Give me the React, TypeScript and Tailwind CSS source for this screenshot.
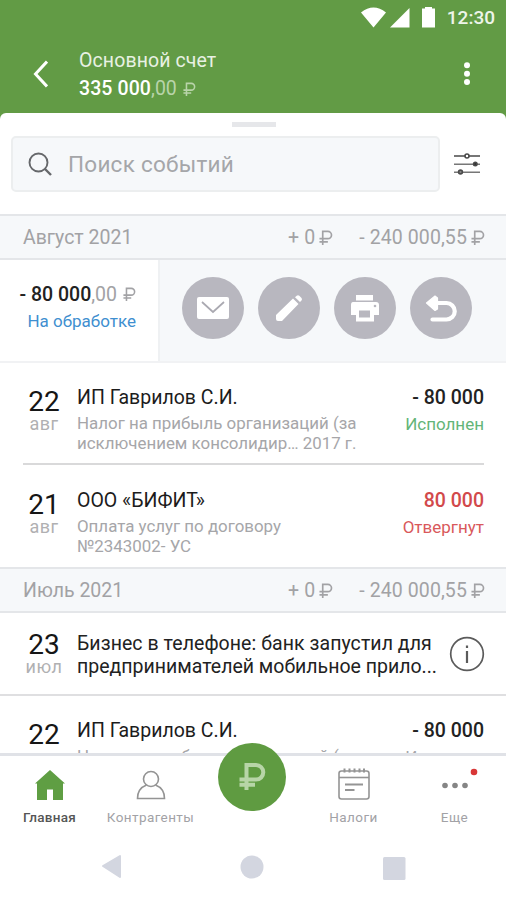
import React from "react";

const Ruble = ({ className }: { className: string }) => (
  <svg viewBox="0 0 15 16" className={className} fill="none" stroke="currentColor" strokeWidth="1.8">
    <path d="M4 16V1.500h5.500a3.900 3.900 0 0 1 0 7.800H0.500M0.500 12.700h9" />
  </svg>
);

function MonthBar({ title }: { title: string }) {
  return (
    <div className="flex h-[46px] shrink-0 items-center border-y-2 border-[#e4e6e9] bg-[#f6f8fa] pt-[2px] pl-[23px] pr-[21px] text-[19.5px] text-[#a2a2a5]">
      <span className="grow">{title}</span>
      <span className="flex items-center tracking-[0.1px]">+ 0<Ruble className="mb-[2px] ml-[4px] h-[15px] w-[14px]" /></span>
      <span className="ml-[26px] flex items-center tracking-[0.1px]">- 240 000,55<Ruble className="mb-[2px] ml-[4px] h-[15px] w-[14px]" /></span>
    </div>
  );
}

function DateBox({ day, month }: { day: string; month: string }) {
  return (
    <div className="w-[42px] shrink-0 text-center">
      <div className="text-[28px] leading-[27px] text-[#161616]">{day}</div>
      <div className="text-[18px] leading-[18px] tracking-[0.5px] text-[#b0b0b2]">{month}</div>
    </div>
  );
}

type EventProps = {
  day: string;
  name: string;
  lines: string[];
  amount: string;
  amountClass: string;
  status: string;
  statusClass: string;
};

function EventRow({ day, name, lines, amount, amountClass, status, statusClass }: EventProps) {
  return (
    <div className="flex pl-[23px] pr-[22px] pt-[25px]">
      <DateBox day={day} month="авг" />
      <div className="ml-[12px] grow whitespace-nowrap">
        <div className="-mt-[2px] text-[19.5px] leading-[24px] text-[#1c1c1c]">{name}</div>
        <div className="mt-[4px] text-[16.9px] leading-[19.5px] text-[#a6a6a9]">
          {lines.map((l) => <div key={l}>{l}</div>)}
        </div>
      </div>
      <div className="whitespace-nowrap text-right">
        <div className={"-mt-[2px] text-[19.5px] leading-[24px] " + amountClass}>{amount}</div>
        <div className={"mt-[4px] text-[17px] leading-[20px] " + statusClass}>{status}</div>
      </div>
    </div>
  );
}

const Circle = ({ children }: { children: React.ReactNode }) => (
  <div className="flex size-[62px] items-center justify-center rounded-full bg-[#b8b7bf]">
    <svg viewBox="0 0 62 62" className="size-[62px]">{children}</svg>
  </div>
);

function NavItem({ label, active, children }: { label: string; active?: boolean; children: React.ReactNode }) {
  return (
    <div className="flex w-[101px] flex-col items-center">
      <svg viewBox="0 0 50 42" className="mt-[11px] h-[42px] w-[50px]">{children}</svg>
      <span className={active ? "text-[13.5px] leading-[16px] font-medium text-[#555] tracking-[0.3px]" : "text-[13.5px] leading-[16px] text-[#a2a2a6] tracking-[0.4px]"}>{label}</span>
    </div>
  );
}

export default function App() {
  return (
    <div className="flex h-[900px] w-[506px] flex-col overflow-hidden bg-[#629b45] font-['Roboto',sans-serif]">
      <header className="h-[113px] shrink-0 text-white">
        <div className="flex h-[36px] justify-end pr-[11px]">
          <svg viewBox="0 0 76 36" className="h-[36px] w-[76px]" fill="#fff">
            <path d="M1 12.500Q13.500 2.500 26 12.500L13.500 27.500zM30 27.500L49.500 8V27.500zM62 8.500h3V7h7v1.500h3V27.500H62z" />
          </svg>
          <span className="ml-[11px] pt-[6px] text-[19px] leading-[24px] font-medium text-[#eef5ea]">12:30</span>
        </div>
        <div className="flex pl-[33px] pr-[36px]">
          <svg viewBox="0 0 15 28" className="mt-[24px] h-[28px] w-[15px]" fill="none" stroke="#fff" strokeWidth="3">
            <path d="M14 1.500L2.500 14L14 26.500" />
          </svg>
          <div className="ml-[31px] grow pt-[11px] text-[19.5px] leading-[28px]">
            <div className="text-[#e8f1e3] tracking-[0.1px]">Основной счет</div>
            <div className="flex items-center"><b className="font-medium tracking-[0.1px]">335 000</b><span className="text-[#b9d4aa]">,00</span><Ruble className="mb-[1px] ml-[6px] h-[14px] w-[13px] text-[#b9d4aa]" /></div>
          </div>
          <svg viewBox="0 0 6 24" className="mt-[26px] h-[24px] w-[6px]" fill="#fff">
            <circle cx="3" cy="3.200" r="3" /><circle cx="3" cy="11.800" r="3" /><circle cx="3" cy="20" r="3" />
          </svg>
        </div>
      </header>

      <main className="flex h-[640px] shrink-0 flex-col overflow-hidden rounded-t-[6px] bg-white">
        <div className="mt-[9px] ml-[232px] h-[5px] w-[44px] shrink-0 bg-[#e6e7ea]" />
        <div className="mt-[9px] flex shrink-0 items-center pl-[11px]">
          <div className="flex h-[56px] w-[429px] items-center rounded-[5px] border-2 border-[#eceeef] bg-[#f6f8fa] pl-[15px]">
            <svg viewBox="0 0 24 24" className="size-[24px]" fill="none" stroke="#66686b" strokeWidth="1.900">
              <circle cx="10.500" cy="10.500" r="9" /><path d="M17 17L23 23" strokeWidth="2.400" />
            </svg>
            <span className="ml-[16px] pt-[1px] text-[22.5px] tracking-[0.25px] text-[#a5a6a9]">Поиск событий</span>
          </div>
          <svg viewBox="0 0 28 24" className="ml-[13px] h-[24px] w-[28px]" fill="none" stroke="#4a4a4a" strokeWidth="1.600">
            <path d="M1 4H12M16 4H27" /><circle cx="14" cy="4" r="2" fill="#fff" />
            <path d="M1 12.300H27M1 20.300H27" stroke="#777" /><circle cx="22.300" cy="12" r="1.700" fill="#333" /><circle cx="7.500" cy="20" r="1.900" fill="#888" />
          </svg>
        </div>
        <div className="h-[22px] shrink-0" />
        <MonthBar title="Август 2021" />

        <div className="flex h-[103px] shrink-0 border-b-2 border-[#f1f2f4] bg-[#f6f8fa]">
          <div className="w-[160px] border-r-2 border-[#eff1f3] bg-white pr-[22px] pt-[23px] text-right">
            <div className="flex items-center justify-end text-[19.5px] leading-[24px]"><span className="font-medium text-[#222]">- 80 000</span><span className="text-[#a2a2a5]">,00</span><Ruble className="mb-[2px] ml-[6px] h-[14px] w-[13px] text-[#a2a2a5]" /></div>
            <div className="mt-[4px] text-[17px] leading-[20px] text-[#3f8fd0]">На обработке</div>
          </div>
          <div className="ml-[22px] flex gap-[14px] pt-[17px]">
            <Circle>
              <rect x="15" y="20" width="32" height="22" rx="2" fill="#fff" />
              <path d="M20 25L31 35L42 25" fill="none" stroke="#aaa9b1" strokeWidth="1.700" />
            </Circle>
            <Circle>
              <path d="M18 42v-4L35 21.500L40.500 27L24 44H20Q18 44 18 42zM37 20.300L38.700 18.800Q40 17.800 41.300 18.800L43.500 21Q44.500 22.300 43.500 23.500L42 25z" fill="#fff" />
            </Circle>
            <Circle>
              <path d="M22 18h17v5.500H22zM19 25h23q3 0 3 3v10h-5v6.500H22V38h-5V28q0-3 2-3z" fill="#fff" />
              <rect x="25" y="33.500" width="11" height="7" fill="#b8b7bf" /><circle cx="41" cy="29" r="1.300" fill="#b8b7bf" />
            </Circle>
            <Circle>
              <path d="M24 26H36.500a8 8 0 0 1 0 16.500H22.500" fill="none" stroke="#fff" strokeWidth="4.200" strokeLinecap="round" />
              <path d="M16.500 26L25 19L27.500 21V32L25 33.500z" fill="#fff" stroke="#fff" strokeWidth="1.200" strokeLinejoin="round" />
            </Circle>
          </div>
        </div>

        <div className="h-[100px] shrink-0">
          <EventRow day="22" name="ИП Гаврилов С.И." lines={["Налог на прибыль организаций (за", "исключением консолидир… 2017 г."]} amount="- 80 000" amountClass="font-medium text-[#222]" status="Исполнен" statusClass="text-[#64b578]" />
        </div>
        <div className="ml-[23px] mr-[22px] h-[2px] shrink-0 bg-[#d9d9da]" />
        <div className="h-[102px] shrink-0 pt-px">
          <EventRow day="21" name="ООО «БИФИТ»" lines={["Оплата услуг по договору", "№2343002- УС"]} amount="80 000" amountClass="font-medium text-[#d2494b]" status="Отвергнут" statusClass="text-[#d9595b]" />
        </div>
        <MonthBar title="Июль 2021" />
        <div className="flex h-[83px] shrink-0 border-b-2 border-[#dfdfe1] pl-[23px] pr-[21px] pt-[18px]">
          <DateBox day="23" month="июл" />
          <div className="ml-[12px] grow whitespace-nowrap pt-px text-[19.5px] leading-[23px] text-[#222]">
            <div className="tracking-[0.06px]">Бизнес в телефоне: банк запустил для</div>
            <div>предпринимателей мобильное прило...</div>
          </div>
          <svg viewBox="0 0 36 36" className="mt-[5px] size-[36px]" fill="none" stroke="#5b5b5b" strokeWidth="1.700">
            <circle cx="18" cy="18" r="16.300" /><path d="M18 15V27M18 9.500V12" strokeWidth="2.200" />
          </svg>
        </div>
        <EventRow day="22" name="ИП Гаврилов С.И." lines={["Налог на прибыль организаций (за"]} amount="- 80 000" amountClass="font-medium text-[#222]" status="Исполнен" statusClass="text-[#a6a6a9]" />
      </main>

      <nav className="relative flex h-[79px] shrink-0 border-t-[3px] border-[#e0e2e7] bg-white">
        <div className="-ml-px flex">
          <NavItem label="Главная" active>
            <path d="M25 3L40 16.500H38V33H28V22.500H22V33H12V16.500H10z" fill="#5f9e43" />
          </NavItem>
          <NavItem label="Контрагенты">
            <g fill="none" stroke="#949494" strokeWidth="1.600"><circle cx="25" cy="12" r="7.500" /><path d="M20.500 18Q11.500 21.500 11.500 31.500H38.500Q38.500 21.500 29.500 18" /></g>
          </NavItem>
        </div>
        <div className="w-[102px]" />
        <NavItem label="Налоги">
          <g fill="none" stroke="#949494" strokeWidth="1.600"><rect x="10" y="4" width="30" height="28" rx="2.500" /><path d="M10 10.500H40" /><path d="M16 17.500H34M16 23H25.500" strokeWidth="2" /><path d="M15.500 1.500V5.500M20.500 1.500V5.500M25.500 1.500V5.500M30.500 1.500V5.500M35 1.500V5.500" strokeWidth="2" /></g>
        </NavItem>
        <NavItem label="Еще">
          <g fill="#858585"><circle cx="15" cy="18.500" r="2.800" /><circle cx="25" cy="18.500" r="2.800" /><circle cx="35" cy="18.500" r="2.800" /></g>
          <circle cx="44" cy="5" r="3.300" fill="#d83636" />
        </NavItem>
        <div className="absolute -top-[13px] left-[218px] flex size-[68px] items-center justify-center rounded-full bg-[#5f9b41]">
          <svg viewBox="0 0 68 68" className="size-[68px]" fill="none" stroke="#b7d5a7" strokeWidth="4">
            <path d="M28.500 47V22H38a7.300 7.300 0 0 1 0 14.600H21.500M21.500 41.700H37" />
          </svg>
        </div>
      </nav>
      <footer className="flex h-[68px] shrink-0 bg-white">
        <svg viewBox="0 0 506 68" className="h-[68px] w-[506px]" fill="#d3d6e0">
          <path d="M103 34L120 24V45z" stroke="#d3d6e0" strokeWidth="2" strokeLinejoin="round" />
          <circle cx="252" cy="35" r="11.500" /><rect x="383" y="25" width="22.500" height="23" rx="1.500" />
        </svg>
      </footer>
    </div>
  );
}
